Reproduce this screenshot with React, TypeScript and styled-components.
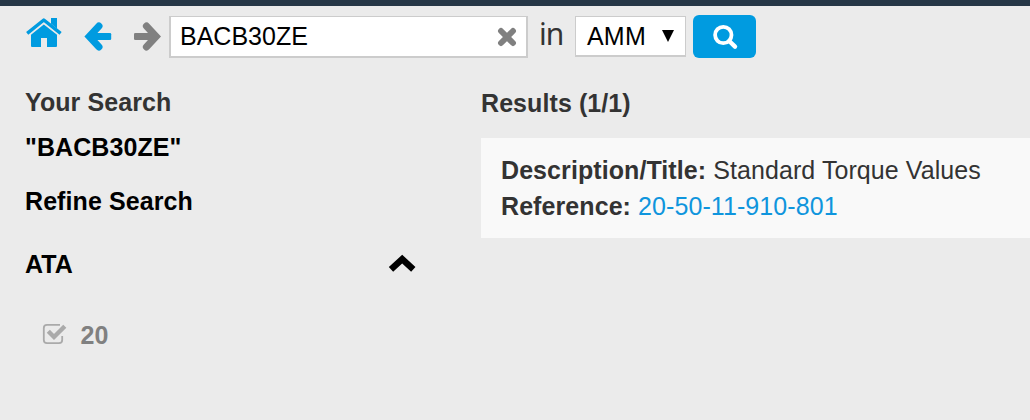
import React from 'react';
import styled, { createGlobalStyle } from 'styled-components';

const GlobalStyle = createGlobalStyle`
  *, *::before, *::after { box-sizing: border-box; }
  body {
    margin: 0;
    background: #ebebeb;
    color: #333;
    font-family: "Liberation Sans", Arial, sans-serif;
    font-size: 25px;
    overflow: hidden;
  }
`;

const Page = styled.div`
  height: 420px;
  border-top: 6px solid #263746;
  overflow: hidden;
`;

const Toolbar = styled.header`
  display: flex;
  align-items: flex-start;
  padding: 9px 0 0 25px;
  height: 73px;
`;

const NavIcon = styled.svg<{ $gap: number }>`
  flex: none;
  display: block;
  margin-right: ${(p) => p.$gap}px;
`;

const SearchField = styled.div`
  display: flex;
  align-items: center;
  justify-content: space-between;
  width: 359px;
  height: 42px;
  margin-top: 1px;
  padding: 0 9px;
  background: #fff;
  border: 2px solid #ccc;
  border-top-width: 1px;
`;

const Query = styled.span`
  color: #000;
  line-height: 38px;
  padding-bottom: 2px;
`;

const InLabel = styled.span`
  width: 47px;
  padding-left: 11px;
  font-family: "Noto Sans", sans-serif;
  font-size: 30px;
  letter-spacing: -1px;
  line-height: 38px;
`;

const ManualSelect = styled.div`
  display: flex;
  align-items: center;
  justify-content: space-between;
  width: 111px;
  height: 41px;
  margin-top: 1px;
  padding: 0 11px 0 11px;
  background: #fff;
  border: 1px solid #ccc;
  border-bottom-width: 2px;
  color: #000;
  letter-spacing: 0.2px;
  line-height: 39px;
`;

const SearchButton = styled.button`
  width: 63px;
  height: 43px;
  margin-left: 7px;
  padding: 0;
  border: 0;
  border-radius: 6px;
  background: #009be0;
`;

const Columns = styled.main`
  display: grid;
  grid-template-columns: 481px 1fr;
`;

const Sidebar = styled.aside`
  padding: 9px 65px 0 25px;
`;

const Heading = styled.h2<{ $color?: string; $height: number }>`
  margin: 0;
  font-size: 25px;
  font-weight: 700;
  line-height: 28px;
  height: ${(p) => p.$height}px;
  color: ${(p) => p.$color ?? '#000'};
  letter-spacing: 0.08px;
  white-space: nowrap;
`;

const FacetHeader = styled.div`
  display: flex;
  justify-content: space-between;
  height: 71px;
`;

const Option = styled.label`
  display: flex;
  padding-left: 17px;
  gap: 13.5px;
  color: #808080;
  font-weight: 700;
  line-height: 28px;
`;

const Results = styled.section`
  padding-top: 10px;
`;

const ResultCard = styled.article`
  height: 100px;
  padding: 14px 20px;
  background: #f9f9f9;
  line-height: 36px;
  letter-spacing: 0.08px;
  white-space: nowrap;
`;

const Link = styled.a`
  color: #0f95dd;
  text-decoration: none;
`;

export default function App() {
  return (
    <>
      <GlobalStyle />
      <Page>
        <Toolbar>
          <NavIcon $gap={21} width="38" height="36" viewBox="25 15 38 36" fill="#009be0">
            <path d="M51 18h6v12l-6-5z" />
            <path d="M27.2 34.6L43.8 21L60.6 34.6" fill="none" stroke="#ebebeb" strokeWidth="5" />
            <path d="M27.2 33.4L43.8 20L60.6 33.4" fill="none" stroke="#009be0" strokeWidth="3.4" strokeLinejoin="round" />
            <path d="M31 34.8L43.8 24.4L57 34.8V46q0 1-1 1h-9v-9h-6v9h-9q-1 0-1-1z" />
          </NavIcon>
          <NavIcon $gap={21} width="28" height="36" viewBox="84 15 28 36" fill="none" stroke="#009be0" strokeWidth="7.2">
            <path d="M109.8 36.5H89" strokeWidth="7" />
            <path d="M110 34.2V38.8" strokeWidth="2.4" strokeLinecap="round" />
            <path d="M98.9 26.1L89.3 36.5L98.9 46.9" strokeLinecap="round" />
          </NavIcon>
          <NavIcon $gap={8} width="28" height="36" viewBox="133 15 28 36" fill="none" stroke="#808080" strokeWidth="7.2">
            <path d="M135.2 36.5H156" strokeWidth="7" />
            <path d="M135.2 34.2V38.8" strokeWidth="2.4" strokeLinecap="round" />
            <path d="M146.5 26.1L156.1 36.5L146.5 46.9" strokeLinecap="round" />
          </NavIcon>
          <SearchField>
            <Query>BACB30ZE</Query>
            <svg width="20" height="20" viewBox="0 0 20 20" fill="none" stroke="#808080" strokeWidth="5.9" strokeLinecap="round">
              <path d="M4 4L16 16M16 4L4 16" />
            </svg>
          </SearchField>
          <InLabel>in</InLabel>
          <ManualSelect>
            AMM
            <svg width="12" height="12" viewBox="0 0 12 12"><path d="M0 0H12L6 12z" /></svg>
          </ManualSelect>
          <SearchButton aria-label="Search">
            <svg width="63" height="43" viewBox="693 15 63 43" fill="none" stroke="#fff" display="block">
              <circle cx="723.3" cy="35" r="8.2" strokeWidth="3.8" />
              <path d="M729.2 41L735 46.6" strokeWidth="4.4" strokeLinecap="round" />
            </svg>
          </SearchButton>
        </Toolbar>
        <Columns>
          <Sidebar>
            <Heading $color="#333" $height={45}>Your Search</Heading>
            <Heading $height={54}>"BACB30ZE"</Heading>
            <Heading $height={63}>Refine Search</Heading>
            <FacetHeader>
              <Heading $height={28}>ATA</Heading>
              <svg width="28" height="28" viewBox="388 250 28 28" fill="none" stroke="#000" strokeWidth="6.4">
                <path d="M391 269.4L402.2 259.2L413.3 269.4" />
              </svg>
            </FacetHeader>
            <Option>
              <svg width="25" height="28" viewBox="42 321 25 28" fill="none" stroke="#aaa">
                <path d="M60 324.8H47q-3.2 0-3.2 3.2V340q0 3.2 3.2 3.2H59q3.2 0 3.2-3.2v-4" strokeWidth="1.8" />
                <path d="M48.3 331.3L54 337L64.8 326.2" strokeWidth="4.4" />
              </svg>
              20
            </Option>
          </Sidebar>
          <Results>
            <Heading $color="#333" $height={49}>Results (1/1)</Heading>
            <ResultCard>
              <div><b>Description/Title:</b> Standard Torque Values</div>
              <div><b>Reference:</b> <Link>20-50-11-910-801</Link></div>
            </ResultCard>
          </Results>
        </Columns>
      </Page>
    </>
  );
}
